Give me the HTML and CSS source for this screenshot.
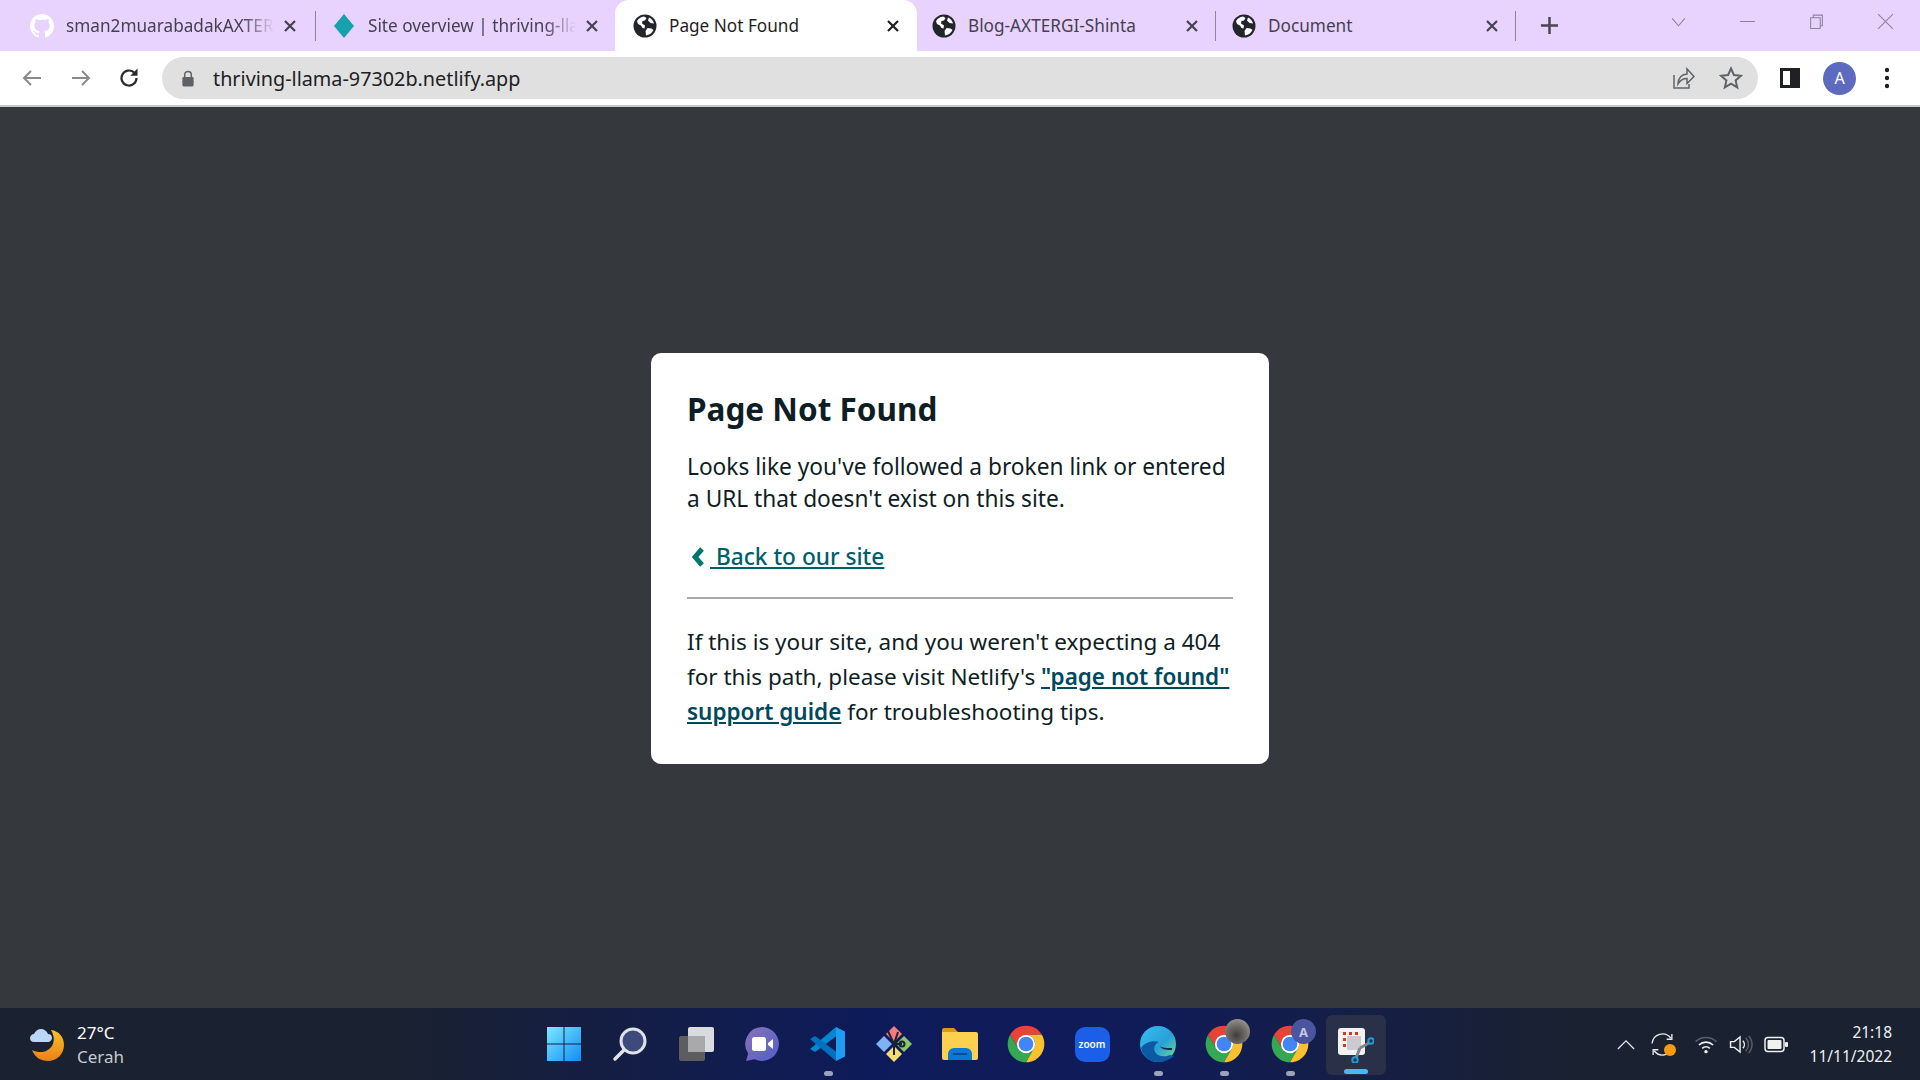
FILE: index.html
```html
<!DOCTYPE html>
<html lang="en">
<head>
  <meta charset="UTF-8">
  <title>Page Not Found</title>
  <link rel="stylesheet" href="styles.css">
</head>
<body>
  <svg class="defs" width="0" height="0">
    <symbol id="globe" viewBox="0 0 24 24">
      <circle cx="12" cy="12" r="11.5" fill="#22262a"/>
      <path fill="#fff" d="M11 2.500C8 3 5.600 4.600 4 7l1 3 3 1.500 1.500 2.500 2 .5.5-3-3-2 .5-2.500 2.500-.5 1.500-2.500zM14.500 14l-2 3 .5 4.500c3.500-.5 6-2.500 7.500-5.500l-2-1.500zM16 3.500l-1 3 2.500 2.500 3.500.5C20.500 7 18.500 4.500 16 3.500z"/>
    </symbol>
    <symbol id="close" viewBox="0 0 16 16">
      <path d="M3 3l10 10M13 3L3 13" fill="none" stroke="currentColor" stroke-width="2.200"/>
    </symbol>
    <symbol id="chrome" viewBox="0 0 48 48">
      <path fill="#ea4335" d="M41.320 14A20 20 0 0 0 6.680 14L15.340 29A10 10 0 0 1 24 14Z"/>
      <path fill="#34a853" d="M6.680 14A20 20 0 0 0 24 44L32.660 29A10 10 0 0 1 15.340 29Z"/>
      <path fill="#fbc02d" d="M24 44A20 20 0 0 0 41.320 14H24A10 10 0 0 1 32.660 29Z"/>
      <circle cx="24" cy="24" r="10" fill="#fff"/>
      <circle cx="24" cy="24" r="8" fill="#4285f4"/>
    </symbol>
  </svg>

  <div class="tabstrip">
    <div class="tab sep first">
      <svg class="favicon" viewBox="0 0 16 16"><path fill="#fff" d="M8 0C3.580 0 0 3.580 0 8c0 3.540 2.290 6.530 5.470 7.590.4.070.55-.17.55-.38 0-.19-.01-.82-.01-1.490-2.010.37-2.530-.49-2.690-.94-.09-.23-.48-.94-.82-1.130-.28-.15-.68-.52-.01-.53.63-.01 1.080.58 1.230.82.72 1.210 1.870.87 2.330.66.07-.52.28-.87.51-1.070-1.780-.2-3.640-.89-3.640-3.950 0-.87.31-1.590.82-2.150-.08-.2-.36-1.020.08-2.120 0 0 .67-.21 2.200.82.64-.18 1.320-.27 2-.27s1.360.09 2 .27c1.530-1.040 2.200-.82 2.200-.82.44 1.100.16 1.920.08 2.120.51.56.82 1.270.82 2.150 0 3.070-1.870 3.750-3.650 3.950.29.25.54.73.54 1.480 0 1.070-.01 1.930-.01 2.200 0 .21.15.46.55.38A8.010 8.010 0 0 0 16 8c0-4.420-3.580-8-8-8z"/></svg>
      <span class="tab-title fade">sman2muarabadakAXTERGI</span>
      <svg class="tab-close"><use href="#close"/></svg>
    </div>
    <div class="tab">
      <svg class="favicon" viewBox="0 0 24 24"><path fill="#15a2ad" d="M12 0l10 12-10 12L2 12z"/></svg>
      <span class="tab-title fade">Site overview | thriving-llama</span>
      <svg class="tab-close"><use href="#close"/></svg>
    </div>
    <div class="tab active">
      <svg class="favicon"><use href="#globe"/></svg>
      <span class="tab-title">Page Not Found</span>
      <svg class="tab-close"><use href="#close"/></svg>
    </div>
    <div class="tab sep">
      <svg class="favicon"><use href="#globe"/></svg>
      <span class="tab-title">Blog-AXTERGI-Shinta</span>
      <svg class="tab-close"><use href="#close"/></svg>
    </div>
    <div class="tab sep">
      <svg class="favicon"><use href="#globe"/></svg>
      <span class="tab-title">Document</span>
      <svg class="tab-close"><use href="#close"/></svg>
    </div>
    <svg class="new-tab" viewBox="0 0 20 20"><path d="M10 1v18M1 10h18" fill="none" stroke="#4a4453" stroke-width="2.600"/></svg>
    <div class="win-controls">
      <svg viewBox="0 0 16 16"><path d="M2 5l6 7 6-7" fill="none" stroke="#8d8399" stroke-width="1"/></svg>
      <svg viewBox="0 0 16 16"><path d="M1 8h14" fill="none" stroke="#8d8399" stroke-width="1"/></svg>
      <svg viewBox="0 0 16 16"><path d="M2.500 4.500h9v10h-9zM5 4.500V2h8.500v10h-2" fill="none" stroke="#8d8399" stroke-width="1"/></svg>
      <svg viewBox="0 0 16 16"><path d="M1 1l14 14M15 1L1 15" fill="none" stroke="#8d8399" stroke-width="1"/></svg>
    </div>
  </div>

  <div class="toolbar">
    <svg class="tool-icon" viewBox="0 0 24 24"><path d="M21 12H4M11 5l-7 7 7 7" fill="none" stroke="#8a8a8a" stroke-width="2"/></svg>
    <svg class="tool-icon" viewBox="0 0 24 24"><path d="M3 12h17M13 5l7 7-7 7" fill="none" stroke="#8a8a8a" stroke-width="2"/></svg>
    <svg class="tool-icon" viewBox="0 0 24 24"><path d="M19.500 12a7.500 7.500 0 1 1-2.400-5.500" fill="none" stroke="#2b2b2b" stroke-width="2.200"/><path d="M20.500 2.500v7.200h-7.200z" fill="#2b2b2b"/></svg>
    <div class="urlbar">
      <svg class="lock" viewBox="0 0 14 18"><path d="M3.500 8V5a3.500 3.500 0 0 1 7 0v3" fill="none" stroke="#5f6368" stroke-width="1.600"/><rect x="1" y="7.500" width="12" height="10" rx="1.500" fill="#5f6368"/></svg>
      <span class="url">thriving-llama-97302b.netlify.app</span>
      <svg class="url-icon" viewBox="0 0 24 24"><path d="M3 9v13h15v-4" fill="none" stroke="#5f6368" stroke-width="1.500"/><path d="M7 18c0-6 4-10 9-10V3l7 7.500-7 7v-5c-4 0-7 2-9 5.500z" fill="none" stroke="#5f6368" stroke-width="1.500"/></svg>
      <svg class="url-icon" viewBox="0 0 24 24"><path d="M12 2.500l2.900 6.500 7.100.7-5.400 4.700 1.600 7-6.200-3.700-6.200 3.700 1.600-7L2 9.700 9.100 9z" fill="none" stroke="#5f6368" stroke-width="2"/></svg>
    </div>
    <svg class="side-icon" viewBox="0 0 20 20"><path fill-rule="evenodd" d="M0 0h20v20H0zM3 3v14h7V3z" fill="#202124"/></svg>
    <div class="avatar">A</div>
    <svg class="menu-icon" viewBox="0 0 6 22"><circle cx="3" cy="3" r="2.200"/><circle cx="3" cy="11" r="2.200"/><circle cx="3" cy="19" r="2.200"/></svg>
  </div>

  <main class="page">
    <div class="card">
      <h1>Page Not Found</h1>
      <p class="intro">Looks like you've followed a broken link or entered a URL that doesn't exist on this site.</p>
      <p class="back">
        <svg class="back-arrow" viewBox="0 0 12 20"><path d="M10 2L3 10l7 8" fill="none" stroke="#00766c" stroke-width="5"/></svg>
        <a href="#"> Back to our site</a>
      </p>
      <hr>
      <p class="note">If this is your site, and you weren't expecting a 404 for this path, please visit Netlify's <a href="#">"page not found" support guide</a> for troubleshooting tips.</p>
    </div>
  </main>

  <footer class="taskbar">
    <div class="weather">
      <svg class="weather-icon" viewBox="0 0 36 36">
        <defs><linearGradient id="moon" x1="0" y1="0" x2="0" y2="1"><stop offset="0" stop-color="#f6c32c"/><stop offset="1" stop-color="#ee7f16"/></linearGradient></defs>
        <path fill="url(#moon)" d="M22 4c8 1 13 7 13 15 0 9-7 16-16 16-8 0-13-4-16-11 8 4 16 2 20-4 3-5 2-11-1-16z"/>
        <path fill="#bcd6f7" d="M5 16c-3 0-4-2-4-4s2-4 4-4c1-3 4-5 7-5s6 2 7 5c3 0 4 2 4 4s-2 4-4 4z"/>
      </svg>
      <div class="weather-text">
        <div>27°C</div>
        <div class="dim">Cerah</div>
      </div>
    </div>

    <div class="apps">
      <div class="app">
        <svg viewBox="0 0 36 36">
          <defs><linearGradient id="win" x1="0" y1="0" x2="1" y2="1"><stop offset="0" stop-color="#7ce8ff"/><stop offset="1" stop-color="#0f8ef5"/></linearGradient></defs>
          <path fill="url(#win)" d="M1 1h16.500v16.500H1zM18.500 1H35v16.500H18.500zM1 18.500h16.500V35H1zM18.500 18.500H35V35H18.500z"/>
        </svg>
      </div>
      <div class="app">
        <svg viewBox="0 0 36 36"><circle cx="21" cy="15" r="12" fill="#3f4a7c" stroke="#dfe3e8" stroke-width="3"/><path d="M12 24L3 33" stroke="#dfe3e8" stroke-width="3.500" stroke-linecap="round"/></svg>
      </div>
      <div class="app">
        <svg viewBox="0 0 36 36"><rect x="1" y="10" width="26" height="25" rx="2" fill="#5d5d5f"/><rect x="10" y="1" width="26" height="25" rx="2" fill="#e9e9ea" opacity=".93"/><rect x="10" y="10" width="17" height="16" fill="#a9a9ab"/></svg>
      </div>
      <div class="app">
        <svg viewBox="0 0 36 36">
          <defs><linearGradient id="chat" x1="0" y1="0" x2="1" y2="1"><stop offset="0" stop-color="#8a72b8"/><stop offset="1" stop-color="#4f5fc8"/></linearGradient></defs>
          <path fill="url(#chat)" d="M18 1a17 17 0 1 1-7.500 32.300L2 35l2.200-7.500A17 17 0 0 1 18 1z"/>
          <rect x="8" y="11" width="14" height="14" rx="2.500" fill="#fff"/><path d="M24 17l5-4v10l-5-4z" fill="#fff"/>
        </svg>
      </div>
      <div class="app running">
        <svg viewBox="0 0 36 36"><path fill="#0088d4" d="M26 1v9.500L5 26l-5-3z"/><path fill="#0072bd" d="M0 13l5-3 21 15.500V35z"/><path fill="#1f9cf0" d="M26 1l9 4.500v25L26 35z"/></svg>
      </div>
      <div class="app">
        <svg viewBox="0 0 36 36"><path fill="#f47c7c" d="M18 0l8 8-8 8-8-8z"/><path fill="#8bc86a" d="M28 10l8 8-8 8-8-8z"/><path fill="#f7dc6f" d="M18 20l8 8-8 8-8-8z"/><path fill="#7fb2f5" d="M8 10l8 8-8 8-8-8z"/><path d="M12 5l6 13v11M22 6l-4 12 8 0" fill="none" stroke="#1c2230" stroke-width="2"/><circle cx="26" cy="18" r="2.500" fill="none" stroke="#1c2230" stroke-width="2"/></svg>
      </div>
      <div class="app">
        <svg viewBox="0 0 36 32"><path fill="#d99a0c" d="M0 2a2 2 0 0 1 2-2h10l4 4h-16z"/><path fill="#fdd04f" d="M0 4h34a2 2 0 0 1 2 2v24a2 2 0 0 1-2 2H2a2 2 0 0 1-2-2z"/><path fill="#0a78d4" d="M6 32v-6a6 6 0 0 1 6-6h12a6 6 0 0 1 6 6v6z"/><path d="M11 26h14" stroke="#0b4f92" stroke-width="2"/></svg>
      </div>
      <div class="app"><svg viewBox="0 0 48 48" class="big"><use href="#chrome"/></svg></div>
      <div class="app"><div class="zoom-icon">zoom</div></div>
      <div class="app running">
        <svg viewBox="0 0 36 36">
          <defs><linearGradient id="edge" x1="0" y1="0" x2="1" y2="1"><stop offset="0" stop-color="#35c1f1"/><stop offset=".55" stop-color="#2a9fd8"/><stop offset="1" stop-color="#6ce48b"/></linearGradient></defs>
          <circle cx="18" cy="18" r="18" fill="url(#edge)"/>
          <path fill="#0c59a4" d="M1 22c2 9 9 14 17 14 6 0 11-2 16-6l-4-1c-5 2-12 2-15-3-2-4 0-8 4-10-6-2-14 0-18 6z"/>
          <path fill="#13294f" d="M32 22c-5 0-10 0-12-2 1 3 5 4 12 4z"/>
        </svg>
      </div>
      <div class="app running">
        <svg viewBox="0 0 48 48" class="big"><use href="#chrome"/></svg>
        <span class="photo-badge"></span>
      </div>
      <div class="app running">
        <svg viewBox="0 0 48 48" class="big"><use href="#chrome"/></svg>
        <span class="letter-badge">A</span>
      </div>
      <div class="app running current">
        <svg viewBox="0 0 36 36">
          <rect x="0" y="1" width="27" height="27" rx="3" fill="#f2f2f2"/>
          <path d="M5 5h3v3H5zM11 5h3v3h-3zM17 5h3v3h-3zM5 11h3v3H5zM5 17h3v3H5z" fill="#d13c14"/>
          <path d="M9 9h14v14H9z" fill="#c9cbd0"/>
          <path d="M22 21l-4 10M22 21l9-5" stroke="#7f858c" stroke-width="3"/>
          <circle cx="33" cy="14" r="2.700" fill="none" stroke="#1f9be0" stroke-width="2"/>
          <circle cx="17" cy="33" r="2.700" fill="none" stroke="#1f9be0" stroke-width="2"/>
        </svg>
      </div>
    </div>

    <div class="tray">
      <svg class="tray-chevron" viewBox="0 0 20 12"><path d="M1 11l9-9 9 9" fill="none" stroke="#e8e8e8" stroke-width="1.400"/></svg>
      <div class="tray-sync">
        <svg viewBox="0 0 24 24"><path d="M2 11a10 10 0 0 1 18-5M22 13a10 10 0 0 1-18 5" fill="none" stroke="#e8e8e8" stroke-width="1.300"/><path d="M21 2v5h-5M3 22v-5h5" fill="none" stroke="#e8e8e8" stroke-width="1.300"/></svg>
        <span class="sync-dot"></span>
      </div>
      <svg class="tray-icon wifi" viewBox="0 0 24 20"><path d="M1 7a16 16 0 0 1 22 0" fill="none" stroke="#5b6068" stroke-width="1.600"/><path d="M4.500 10.500a11 11 0 0 1 15 0M8 14a6 6 0 0 1 8 0" fill="none" stroke="#f0f0f0" stroke-width="1.700"/><circle cx="12" cy="17.500" r="1.800" fill="#f0f0f0"/></svg>
      <svg class="tray-icon" viewBox="0 0 24 20"><path d="M1 7h4l6-5v16l-6-5H1z" fill="none" stroke="#f0f0f0" stroke-width="1.500"/><path d="M14 6a6 6 0 0 1 0 8" fill="none" stroke="#f0f0f0" stroke-width="1.500"/><path d="M17 3a10 10 0 0 1 0 14M20 1a13 13 0 0 1 0 18" fill="none" stroke="#5b6068" stroke-width="1.500"/></svg>
      <svg class="tray-icon" viewBox="0 0 24 16"><rect x="1" y="1" width="19" height="14" rx="3" fill="none" stroke="#f0f0f0" stroke-width="1.500"/><rect x="3.500" y="3.500" width="14" height="9" rx="1" fill="#f0f0f0"/><rect x="21" y="5.500" width="3" height="5" rx="1" fill="#f0f0f0"/></svg>
      <div class="clock">
        <div>21:18</div>
        <div>11/11/2022</div>
      </div>
    </div>
  </footer>
</body>
</html>
```

FILE: styles.css
```css
* {
  box-sizing: border-box;
}
html, body {
  height: 100%;
}
body {
  margin: 0;
  display: flex;
  flex-direction: column;
  height: 1080px;
  overflow: hidden;
  font-family: "Noto Sans", Arial, sans-serif;
  background: #35383d;
}
.defs {
  display: block;
  height: 0;
}

/* tabs */
.tabstrip {
  display: flex;
  align-items: stretch;
  height: 51px;
  padding-left: 14px;
  background: #e8d3ff;
}
.tab {
  display: flex;
  align-items: center;
  width: 300px;
  padding: 0 16px;
  color: #46414f;
  font-size: 17.2px;
}
.tab.first {
  width: 302px;
  padding-right: 18px;
}
.tab.active {
  width: 302px;
  margin: 0 -1px;
  padding: 0 16px 0 18px;
  background: #fff;
  border-radius: 14px 14px 0 0;
  color: #1f1f1f;
}
.tab.sep::after {
  content: "";
  flex: none;
  width: 1px;
  height: 30px;
  margin: 0 -16px 0 15px;
  background: #8e8598;
}
.tab.first::after {
  margin: 0 -18px 0 17px;
}
.favicon {
  flex: none;
  width: 24px;
  height: 24px;
  margin-right: 12px;
}
.tab-title {
  flex: 1;
  min-width: 0;
  overflow: hidden;
  white-space: nowrap;
}
.tab-title.fade {
  -webkit-mask-image: linear-gradient(to right, #000 85%, transparent);
  mask-image: linear-gradient(to right, #000 85%, transparent);
}
.tab-close {
  flex: none;
  width: 16px;
  height: 16px;
  margin-left: 8px;
}
.new-tab {
  align-self: center;
  width: 19px;
  height: 19px;
  margin-left: 24px;
}
.win-controls {
  display: flex;
  align-items: center;
  gap: 52px;
  margin-left: auto;
  padding: 0 26px 8px 0;
}
.win-controls svg {
  width: 17px;
  height: 17px;
}

/* toolbar */
.toolbar {
  display: flex;
  align-items: center;
  height: 54px;
  padding: 0 30px 0 20px;
  background: #fff;
}
.tool-icon {
  width: 24px;
  height: 24px;
  margin-right: 25px;
}
.tool-icon:nth-child(3) {
  margin-left: -1px;
}
.urlbar {
  display: flex;
  align-items: center;
  flex: 1;
  height: 42px;
  margin: 0 22px 0 -4px;
  padding: 0 15px 0 19px;
  border-radius: 21px;
  background: #e0e0e0;
}
.lock {
  width: 14px;
  height: 17px;
  margin-right: 18px;
}
.url {
  flex: 1;
  color: #202124;
  font-size: 19.8px;
}
.url-icon {
  width: 24px;
  height: 24px;
  margin-left: 24px;
}
.side-icon {
  width: 20px;
  height: 20px;
  margin-right: 23px;
}
.avatar {
  display: flex;
  align-items: center;
  justify-content: center;
  width: 33px;
  height: 33px;
  margin-right: 28px;
  border-radius: 50%;
  background: #5c6bc0;
  color: #fff;
  font-size: 16px;
}
.menu-icon {
  width: 6px;
  height: 22px;
  fill: #202124;
}

/* 404 card */
.page {
  flex: 1;
  display: flex;
  align-items: center;
  justify-content: center;
  border-top: 2px solid #c8c8c8;
  padding-top: 2px;
}
.card {
  width: 618px;
  height: 411px;
  padding: 29px 36px 0;
  border-radius: 10px;
  background: #fff;
  color: #0e1e25;
  font-size: 22.7px;
}
h1 {
  margin: 0 0 15px;
  font-size: 31.5px;
  line-height: 54px;
  font-weight: 700;
}
.intro {
  margin: 0 0 26px;
  line-height: 32px;
}
.back {
  display: flex;
  align-items: center;
  margin: 0 0 24px;
  line-height: 32px;
}
.back-arrow {
  width: 12px;
  height: 20px;
  margin: 0 6px 0 5px;
}
.back a {
  color: #005f6a;
  font-weight: 500;
  white-space: pre;
}
hr {
  height: 2px;
  margin: 0 0 25px;
  border: 0;
  background: #a9a9a9;
}
.note {
  margin: 0;
  font-size: 22.5px;
  line-height: 35px;
}
.note a {
  color: #00495c;
  font-weight: 600;
}

/* windows taskbar */
.taskbar {
  display: grid;
  grid-template-columns: 1fr auto 1fr;
  align-items: center;
  height: 72px;
  background: linear-gradient(to right, #1a2130 0%, #1a2130 20%, #0e1b5a 45%, #101c58 60%, #1a2130 82%);
  color: #fff;
}
.weather {
  display: flex;
  align-items: center;
  padding: 2px 0 0 29px;
}
.weather-icon {
  width: 36px;
  height: 36px;
  margin: -2px 12px 0 0;
}
.weather-text {
  font-size: 17px;
  line-height: 24px;
}
.dim {
  color: #c6cad0;
}
.apps {
  display: flex;
}
.app {
  position: relative;
  display: flex;
  align-items: center;
  justify-content: center;
  width: 66px;
  height: 72px;
}
.app svg {
  width: 36px;
  height: 36px;
}
.app .big {
  width: 44px;
  height: 44px;
}
.app.running::after {
  content: "";
  position: absolute;
  left: 29px;
  bottom: 4px;
  width: 9px;
  height: 5px;
  border-radius: 3px;
  background: #9aa3b8;
}
.app.current {
  align-self: center;
  margin: 2px 3px 0;
  width: 60px;
  height: 60px;
  border-radius: 6px;
  background: #2a3048;
}
.app.current::after {
  left: 18px;
  bottom: 1px;
  width: 24px;
  background: #46b8f5;
}
.zoom-icon {
  display: flex;
  align-items: center;
  justify-content: center;
  width: 35px;
  height: 35px;
  border-radius: 10px;
  background: #1b5fe8;
  color: #fff;
  font-size: 10px;
  font-weight: 600;
}
.photo-badge, .letter-badge {
  position: absolute;
  top: 11px;
  left: 34px;
  width: 25px;
  height: 25px;
  border-radius: 50%;
}
.photo-badge {
  background: radial-gradient(circle at 45% 65%, #3f3d3b 0%, #6f6c67 45%, #b3b0a9 100%);
}
.letter-badge {
  display: flex;
  align-items: center;
  justify-content: center;
  background: #4a559e;
  color: #c4c9ec;
  font-size: 13px;
  font-weight: 700;
}
.tray {
  display: flex;
  align-items: center;
  justify-content: flex-end;
  padding-right: 28px;
}
.tray-chevron {
  width: 18px;
  height: 11px;
  margin-right: 15px;
}
.tray-sync {
  position: relative;
  width: 25px;
  height: 25px;
  margin-right: 19px;
}
.tray-sync svg {
  display: block;
  width: 25px;
  height: 25px;
}
.sync-dot {
  position: absolute;
  right: -1px;
  bottom: 1px;
  width: 12px;
  height: 12px;
  border-radius: 50%;
  background: #f79a0e;
}
.tray-icon {
  width: 24px;
  height: 19px;
  margin-right: 11px;
}
.clock {
  margin-left: 11px;
  font-size: 15.5px;
  line-height: 24px;
  text-align: right;
  color: #f0f0f0;
}
```
